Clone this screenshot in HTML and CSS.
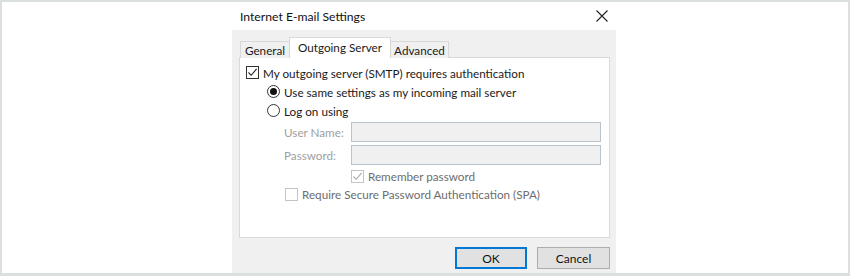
FILE: index.html
```html
<!DOCTYPE html>
<html lang="en">
<head>
    <meta charset="UTF-8">
    <title>Internet E-mail Settings</title>
    <link rel="stylesheet" href="styles.css">
</head>
<body>

<div class="frame">
    <div class="dialog">
        <!-- title bar -->
        <div class="titlebar">
            <span class="title">Internet E-mail Settings</span>
            <svg class="close" width="12" height="12" viewBox="0 0 12 12">
                <path d="M0.5 0.5 L11.5 11.5 M11.5 0.5 L0.5 11.5" stroke="#222" stroke-width="1.1" fill="none"/>
            </svg>
        </div>

        <div class="content">
            <!-- tabs -->
            <div class="tabs">
                <div class="tab tab-general">General</div>
                <div class="tab tab-outgoing active">Outgoing Server</div>
                <div class="tab tab-advanced">Advanced</div>
            </div>

            <div class="panel">
                <label class="row">
                    <span class="check">
                        <svg width="11" height="11" viewBox="0 0 11 11"><path d="M1.5 5.5 L4.2 8.3 L9.6 1.8" stroke="#222" stroke-width="1.1" fill="none"/></svg>
                    </span>
                    My outgoing server (SMTP) requires authentication
                </label>
                <label class="row indent-1">
                    <span class="radio on"></span>
                    Use same settings as my incoming mail server
                </label>
                <label class="row indent-1">
                    <span class="radio"></span>
                    Log on using
                </label>

                <div class="field first">
                    <span class="field-label">User Name:</span>
                    <span class="input"></span>
                </div>
                <div class="field">
                    <span class="field-label">Password:</span>
                    <span class="input"></span>
                </div>

                <label class="row disabled indent-3">
                    <span class="check off">
                        <svg width="11" height="11" viewBox="0 0 11 11"><path d="M1.5 5.5 L4.2 8.3 L9.6 1.8" stroke="#a8a8a8" stroke-width="1.1" fill="none"/></svg>
                    </span>
                    Remember password
                </label>
                <label class="row disabled indent-2">
                    <span class="check off"></span>
                    Require Secure Password Authentication (SPA)
                </label>
            </div>

            <!-- buttons -->
            <div class="buttons">
                <button class="btn default">OK</button>
                <button class="btn">Cancel</button>
            </div>
        </div>
    </div>
</div>

</body>
</html>
```

FILE: styles.css
```css
/* page */
body {
    margin: 0;
    padding: 0;
    background-color: #ffffff;
    font-family: Lato, "Open Sans", sans-serif;
    font-size: 11.7px;
    color: #1a1a1a;
}

/* outer grey frame */
.frame {
    width: 850px;
    height: 276px;
    box-sizing: border-box;
    border: 2px solid #dcdfdf;
    border-bottom-width: 3px;
    background-color: #ffffff;
}

/* dialog window */
.dialog {
    width: 384px;
    height: 100%;
    margin-left: 230px;
    display: flex;
    flex-direction: column;
}

.titlebar {
    height: 28px;
    flex-shrink: 0;
    display: flex;
    align-items: center;
    justify-content: space-between;
    padding: 0 8px 0 8px;
    background-color: #ffffff;
}

.title {
    font-size: 12.2px;
    color: #111;
}

.content {
    flex: 1;
    background-color: #f0f0f0;
    padding: 7px 6px 0 7px;
}

/* tabs */
.tabs {
    display: flex;
    align-items: flex-end;
    height: 21px;
    padding-left: 1px;
    margin-bottom: -1px;
    position: relative;
    z-index: 1;
}

.tab {
    box-sizing: border-box;
    height: 17px;
    line-height: 16px;
    text-align: center;
    border: 1px solid #d9d9d9;
    border-bottom: none;
    background-color: #f0f0f0;
    color: #1a1a1a;
}

.tab + .tab {
    margin-left: -1px;
}

.tab-general { width: 50px; }
.tab-outgoing { width: 102px; }
.tab-advanced { width: 59px; }

.tab.active {
    height: 21px;
    line-height: 19px;
    background-color: #ffffff;
    position: relative;
    z-index: 2;
}

/* tab content */
.panel {
    box-sizing: border-box;
    height: 181px;
    border: 1px solid #d9d9d9;
    background-color: #ffffff;
    padding: 5px 8px 0 6px;
}

.row {
    display: flex;
    align-items: center;
    height: 19px;
    gap: 4px;
}

.indent-1 { padding-left: 21px; }
.indent-2 { padding-left: 39px; }
.indent-3 { padding-left: 105px; }

.check {
    width: 11px;
    height: 11px;
    border: 1px solid #333;
    background-color: #fff;
    display: flex;
}

.check.off {
    border-color: #c4c4c4;
}

.radio {
    width: 11px;
    height: 11px;
    border: 1px solid #333;
    border-radius: 50%;
    background-color: #fff;
    display: flex;
    align-items: center;
    justify-content: center;
}

.radio.on::after {
    content: "";
    width: 7px;
    height: 7px;
    border-radius: 50%;
    background-color: #111;
}

.disabled {
    height: 18px;
    color: #6d6d6d;
}

/* disabled text fields */
.field {
    display: flex;
    align-items: center;
    padding-left: 38px;
    margin-top: 3px;
}

.field.first {
    margin-top: 2px;
}

.field-label {
    width: 67px;
    color: #a0a0a0;
}

.field .input {
    flex: 1;
    height: 18px;
    border: 1px solid #b9c3cc;
    background-color: #f0f0f0;
}

.field + .row {
    margin-top: 2px;
}

/* dialog buttons */
.buttons {
    display: flex;
    justify-content: flex-end;
    gap: 10px;
    padding-top: 9px;
}

.btn {
    width: 73px;
    height: 22px;
    font-family: inherit;
    font-size: 12px;
    color: #111;
    background-color: #e1e1e1;
    border: 1px solid #adadad;
    padding: 0;
}

.btn.default {
    width: 72px;
    border: 2px solid #0078d7;
}
```
